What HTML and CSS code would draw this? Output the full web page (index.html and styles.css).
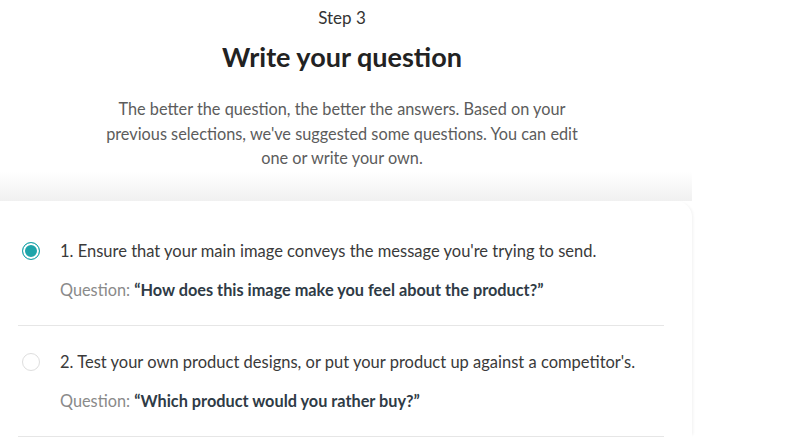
FILE: index.html
```html
<!DOCTYPE html>
<html lang="en">
<head>
<meta charset="utf-8">
<title>Write your question</title>
<link rel="stylesheet" href="styles.css">
</head>
<body>
<main class="page">
  <header class="intro">
    <div class="step">Step 3</div>
    <h1 class="title">Write your question</h1>
    <p class="lead">The better the question, the better the answers. Based on your previous selections, we've suggested some questions. You can edit one or write your own.</p>
  </header>
  <section class="stage">
    <div class="card">
      <label class="option">
        <span class="radio radio-on"></span>
        <span class="option-body">
          <span class="option-title">1. Ensure that your main image conveys the message you're trying to send.</span>
          <span class="option-q">Question: <strong>“How does this image make you feel about the product?”</strong></span>
        </span>
      </label>
      <label class="option">
        <span class="radio"></span>
        <span class="option-body">
          <span class="option-title">2. Test your own product designs, or put your product up against a competitor's.</span>
          <span class="option-q">Question: <strong>“Which product would you rather buy?”</strong></span>
        </span>
      </label>
    </div>
  </section>
</main>
</body>
</html>
```

FILE: styles.css
```css
html, body {
  margin: 0;
  padding: 0;
  background: #ffffff;
}
body {
  font-family: "Lato", "Noto Sans", sans-serif;
  color: #3a3a3a;
  overflow: hidden;
}
.page {
  width: 692px;
}
.intro {
  width: 684px;
  text-align: center;
  padding-top: 8px;
}
.step {
  font-size: 17px;
  line-height: 20px;
  color: #333;
}
.title {
  margin: 13px 0 0;
  font-size: 27px;
  line-height: 32px;
  font-weight: 700;
  color: #222;
}
.lead {
  margin: 24px auto 0;
  width: 486px;
  font-size: 16.3px;
  line-height: 24.5px;
  color: #5c5c5c;
}
.stage {
  padding-top: 30px;
  background: linear-gradient(to bottom, #ffffff 0, #f0f0f0 30px, #ffffff 30px);
}
.card {
  background: #fff;
  border-radius: 0 16px 0 0;
  box-shadow: 3px 0 3px -2px rgba(0,0,0,0.06);
  padding: 14px 28px 0 18px;
}
.option {
  display: flex;
  align-items: flex-start;
  gap: 20px;
  padding: 24px 0 23px 4px;
  border-bottom: 1px solid #e6e6e6;
}
.radio {
  flex: none;
  width: 18px;
  height: 18px;
  margin-top: 3px;
  box-sizing: border-box;
  border-radius: 50%;
  border: 1.5px solid #dedede;
  background: #fff;
}
.radio-on {
  border: 1.5px solid #1ea5aa;
  background: #1ea5aa;
  box-shadow: inset 0 0 0 2px #fff;
}
.option-body {
  display: flex;
  flex-direction: column;
  gap: 15px;
}
.option-title {
  font-size: 16.5px;
  line-height: 24px;
  color: #3a3a3a;
}
.option-q {
  font-size: 16.3px;
  line-height: 24px;
  color: #8a8a8a;
}
.option-q strong {
  font-weight: 700;
  color: #2f3b46;
}
```
